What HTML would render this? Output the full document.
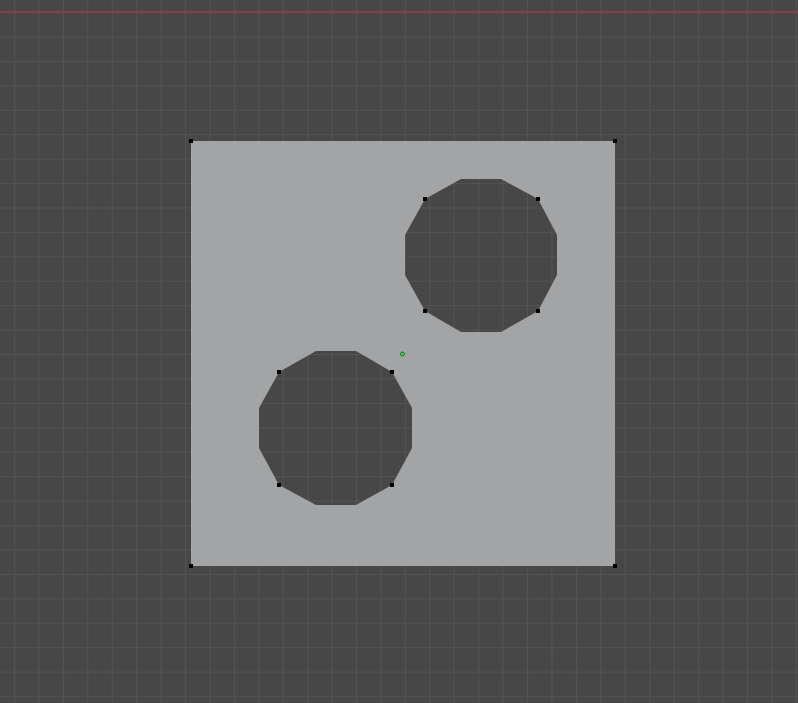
<!DOCTYPE html>
<html><head><style>html,body{margin:0;padding:0;background:#474747;overflow:hidden}</style></head>
<body>
<svg width="798" height="703" viewBox="0 0 798 703" xmlns="http://www.w3.org/2000/svg" style="display:block">
<defs>
<pattern id="g" x="14" y="12" width="24.43" height="24.43" patternUnits="userSpaceOnUse">
<rect x="0" y="0" width="1" height="24.43" fill="#535353"/>
<rect x="0" y="0" width="24.43" height="1" fill="#535353"/>
</pattern>
</defs>
<rect width="798" height="703" fill="#474747"/>
<rect width="798" height="703" fill="url(#g)"/>
<rect x="0" y="11" width="798" height="2" fill="#8a3a48"/>
<path fill="#a3a4a5" fill-rule="evenodd" d="M191 141H615V566H191Z
M461 179L501 179L538 199L557 235L557 275L538 311L501 332L461 332L425 311L405 275L405 235L425 199Z
M316 351L356 351L392 372L412 408L412 448L392 485L356 505L316 505L279 485L259 448L259 408L279 372Z"/>
<g fill="#000">
<rect x="189" y="139" width="4" height="4"/><rect x="613" y="139" width="4" height="4"/>
<rect x="189" y="564" width="4" height="4"/><rect x="613" y="564" width="4" height="4"/>
<rect x="423" y="197" width="4" height="4"/><rect x="536" y="197" width="4" height="4"/>
<rect x="423" y="309" width="4" height="4"/><rect x="536" y="309" width="4" height="4"/>
<rect x="277" y="370" width="4" height="4"/><rect x="390" y="370" width="4" height="4"/>
<rect x="277" y="483" width="4" height="4"/><rect x="390" y="483" width="4" height="4"/>
</g>
<circle cx="402.5" cy="354" r="2" fill="#3ad13a" stroke="#1a5a1a" stroke-width="0.7"/>
</svg>
</body></html>
